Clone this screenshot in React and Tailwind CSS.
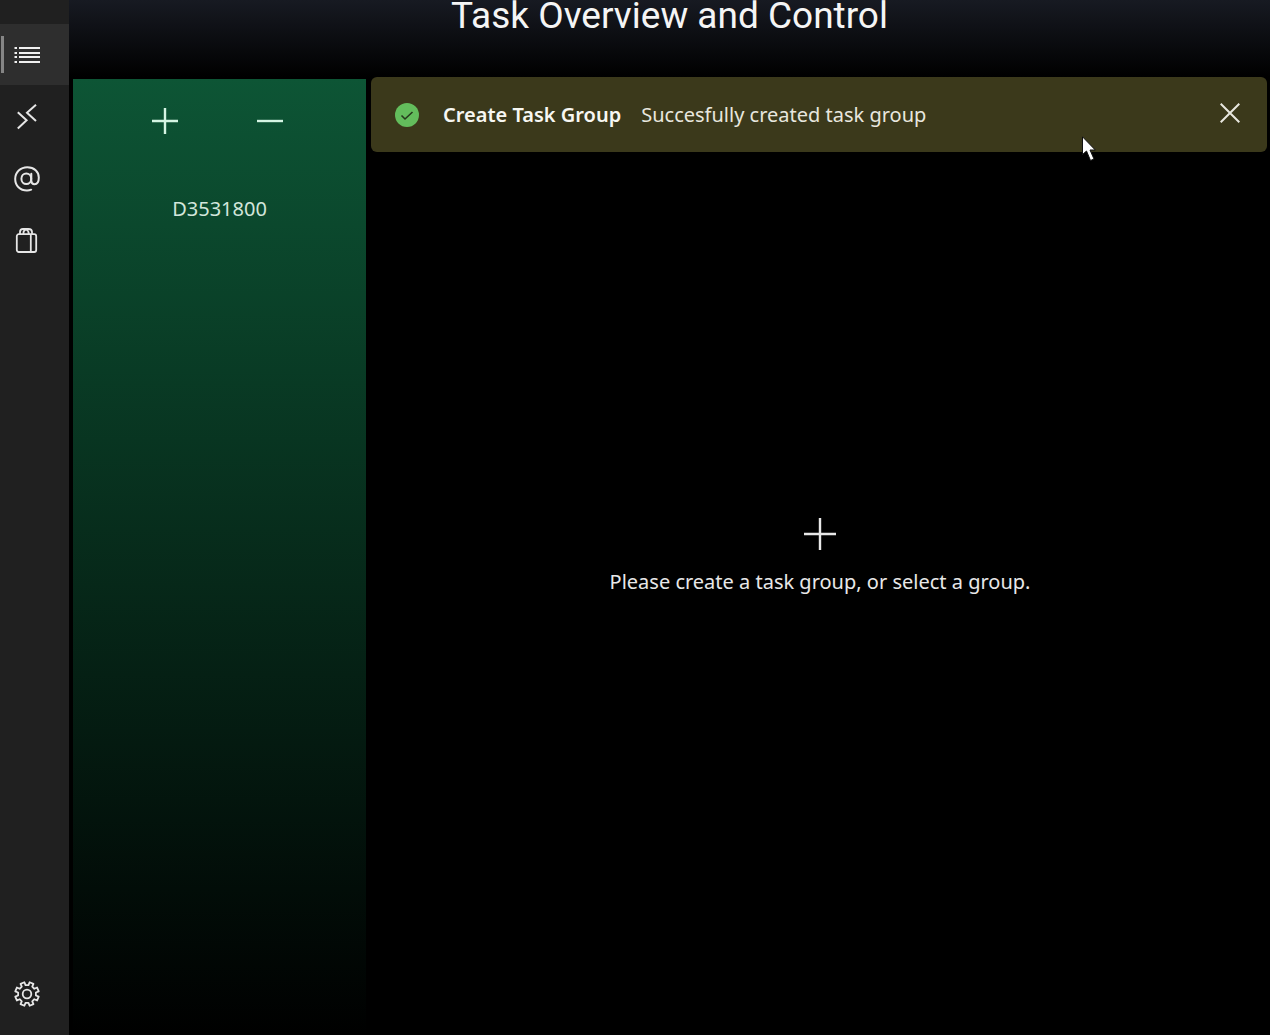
const navItem =
  'flex h-[61px] w-full items-center pl-[14px] text-[#e6e6e6]';

function ListIcon() {
  return (
    <svg width="26" height="26" viewBox="0 0 26 26" fill="currentColor" aria-hidden="true">
      {[5, 10, 14, 19].map((y) => (
        <g key={y}>
          <rect x="0.500" y={y} width="2.500" height="2" />
          <rect x="5" y={y} width="21" height="2" />
        </g>
      ))}
    </svg>
  );
}

function RemoteIcon() {
  return (
    <svg width="26" height="26" viewBox="0 0 26 26" fill="none" stroke="currentColor" strokeWidth="2" aria-hidden="true">
      <path d="M3.800 8.300 12.600 16.300 3.800 24.500M22 .8 13 8.800 22 17" />
    </svg>
  );
}

function AtIcon() {
  return (
    <svg width="26" height="26" viewBox="0 0 26 26" fill="none" stroke="currentColor" strokeWidth="2" strokeLinecap="round" aria-hidden="true">
      <path d="M17.200 23.700C15.800 24.300 14.500 24.600 13 24.600 6 24.600 1.200 19.700 1.200 13 1.200 6.200 6.500 1.200 13.300 1.200 20.300 1.200 24.800 5.700 24.800 11.500 24.800 15.800 23 18.200 20.600 18.200 18.500 18.200 17.300 16.800 17.300 14.800V7.800" />
      <ellipse cx="12.300" cy="12.800" rx="4.900" ry="5.300" />
    </svg>
  );
}

function BagIcon() {
  return (
    <svg width="26" height="26" viewBox="0 1 26 26" fill="none" stroke="currentColor" strokeWidth="1.800" aria-hidden="true">
      <rect x="2.800" y="7.200" width="19.400" height="17.800" rx="2" />
      <path d="M16.800 7.200V25M6 7.200V5Q6 2 9 2H14.500Q18 2 18 5V7.200M9.500 7.200V5.500Q9.500 3.500 12 2.500 14.800 3.300 14.800 7.200" />
    </svg>
  );
}

const gearPath = (() => {
  const points = [];
  for (let i = 0; i < 8; i += 1) {
    const center = i * 45 + 22.5;
    [[-13, 9], [-10, 12], [10, 12], [13, 9]].forEach(([offset, radius]) => {
      const angle = ((center + offset) * Math.PI) / 180;
      points.push(`${(Math.cos(angle) * radius).toFixed(2)} ${(Math.sin(angle) * radius).toFixed(2)}`);
    });
  }
  return `M${points.join('L')}Z`;
})();

function GearIcon() {
  return (
    <svg width="26" height="26" viewBox="-13 -13 26 26" fill="none" stroke="currentColor" strokeWidth="1.800" strokeLinejoin="round" aria-hidden="true">
      <path d={gearPath} />
      <circle r="4.300" />
    </svg>
  );
}

function Sidebar() {
  return (
    <nav aria-label="Main" className="flex w-[69px] shrink-0 flex-col gap-px bg-[#202020] pt-6 pb-[11px]">
      <button type="button" aria-label="Tasks" className="flex h-[61px] w-full items-center gap-[10px] bg-[#2e2e2e] pl-px text-[#f0f0f0]">
        <span className="h-[37px] w-[3px] bg-[#858585]" />
        <ListIcon />
      </button>
      <button type="button" aria-label="Proxies" className={navItem}><RemoteIcon /></button>
      <button type="button" aria-label="Accounts" className={navItem}><AtIcon /></button>
      <button type="button" aria-label="Products" className={navItem}><BagIcon /></button>
      <button type="button" aria-label="Settings" className={`${navItem} mt-auto`}><GearIcon /></button>
    </nav>
  );
}

function GroupPanel() {
  return (
    <aside className="mt-[2px] w-[293px] shrink-0 bg-linear-to-b/srgb from-[#0d5535] to-black">
      <div className="flex justify-center gap-[79px] pt-[29px] pr-1 text-[#d5f5e3]">
        <button type="button" aria-label="Add group">
          <svg width="26" height="26" viewBox="0 0 26 26" stroke="currentColor" strokeWidth="2.400"><path d="M0 13H26M13 0V26" /></svg>
        </button>
        <button type="button" aria-label="Remove group">
          <svg width="26" height="26" viewBox="0 0 26 26" stroke="currentColor" strokeWidth="2.400"><path d="M0 13H26" /></svg>
        </button>
      </div>
      <button type="button" className="mt-[59px] block w-full text-center text-xl leading-8 text-[#d3e6db]">
        D3531800
      </button>
    </aside>
  );
}

function Notice() {
  return (
    <div role="status" className="flex h-[75px] items-center rounded-md bg-[#3b391b] pr-[27px] pl-6 text-xl leading-8 text-[#e8e7df]">
      <svg width="24" height="24" viewBox="0 0 24 24" fill="none" aria-hidden="true">
        <circle cx="12" cy="12" r="12" fill="#63bd5c" />
        <path d="M6.500 12.500 10 16 17.500 9" stroke="#26391c" strokeWidth="1.600" />
      </svg>
      <strong className="ml-6 font-semibold whitespace-nowrap text-[#f7f7f2]">Create Task Group</strong>
      <span className="ml-5 whitespace-nowrap">Succesfully created task group</span>
      <button type="button" aria-label="Close" className="mb-1 ml-auto">
        <svg width="20" height="20" viewBox="0 0 20 20" stroke="currentColor" strokeWidth="2"><path d="M.7.7 19.300 19.300M19.300.7.7 19.300" /></svg>
      </button>
    </div>
  );
}

export default function App() {
  return (
    <div className="relative flex min-h-screen bg-black font-['Noto_Sans',sans-serif]">
      <Sidebar />
      <div className="flex min-w-0 grow flex-col">
        <header className="h-[77px] bg-linear-to-b/srgb from-[#171a22] to-black">
          <h1 className="text-center font-['Roboto',sans-serif] text-[37px] leading-8 text-[#f5f5f5]">
            Task Overview and Control
          </h1>
        </header>
        <div className="flex grow gap-[5px] pr-[3px] pl-1">
          <GroupPanel />
          <main className="flex min-w-0 grow flex-col">
            <Notice />
            <div className="flex grow flex-col items-center justify-center pb-[72px] pl-[2px] text-[#e8e8e8]">
              <button type="button" aria-label="Create task group">
                <svg width="32" height="32" viewBox="0 0 32 32" stroke="currentColor" strokeWidth="2.400"><path d="M0 16H32M16 0V32" /></svg>
              </button>
              <p className="mt-4 text-xl leading-8">Please create a task group, or select a group.</p>
            </div>
          </main>
        </div>
      </div>
      <svg className="pointer-events-none absolute top-[136px] left-[1082px]" width="14" height="26" viewBox="0 0 14 26" aria-hidden="true">
        <path d="M.5.8V18.500L4.500 15 8.500 24.500 12 23 8 14H13.300Z" fill="#fff" stroke="#111" strokeWidth="1" />
      </svg>
    </div>
  );
}
